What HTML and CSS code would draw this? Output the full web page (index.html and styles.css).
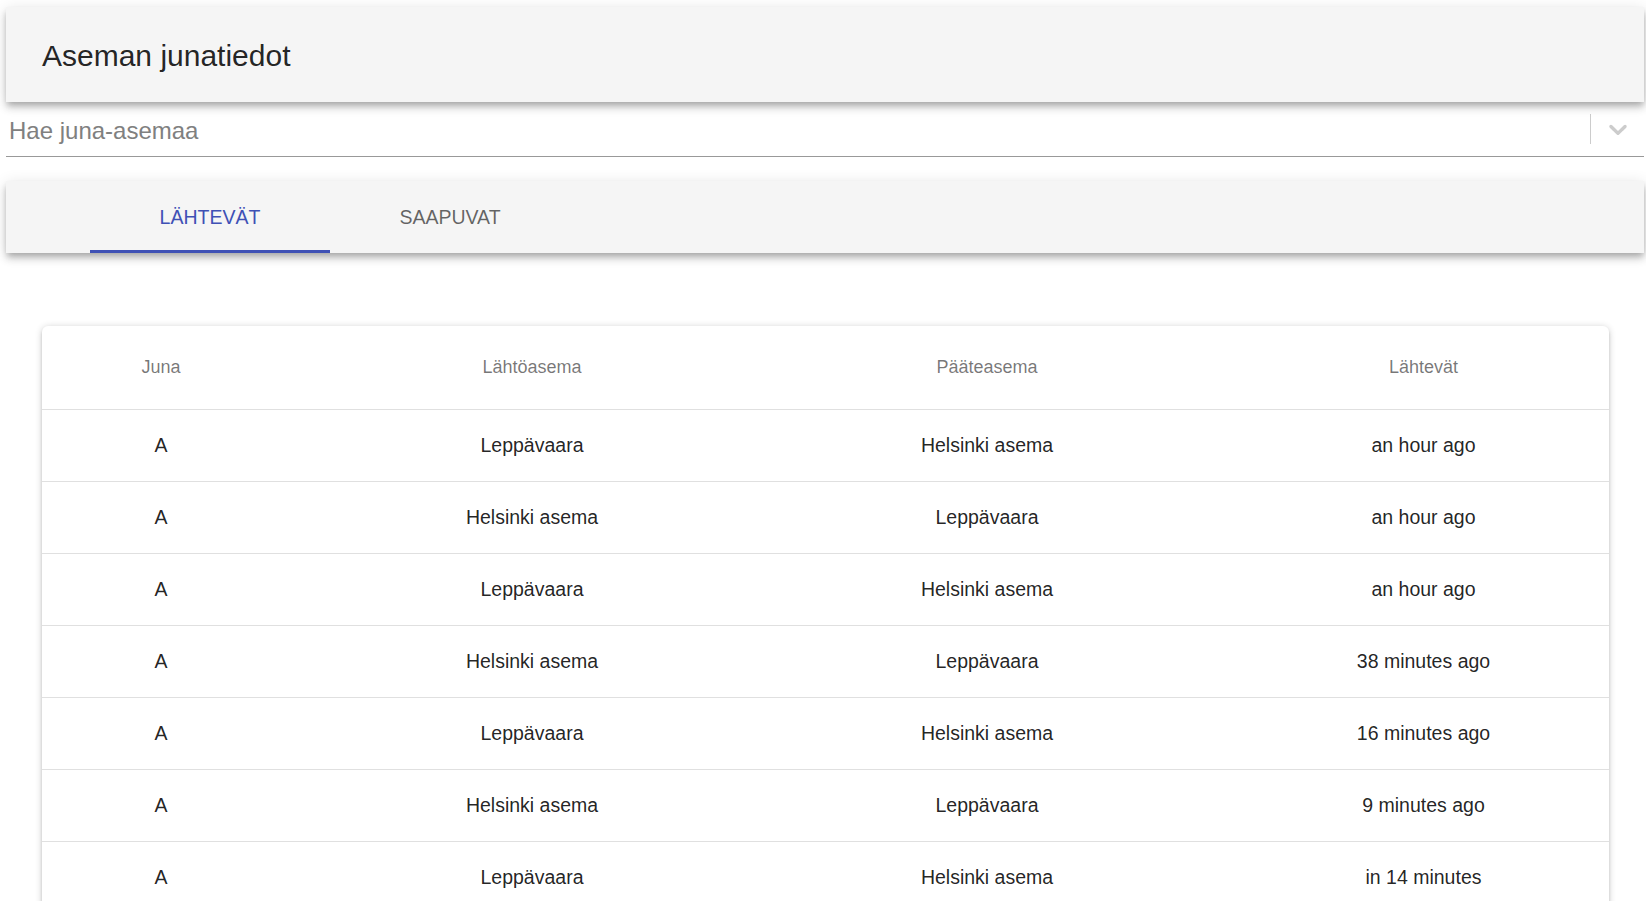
FILE: index.html
```html
<!DOCTYPE html>
<html lang="fi">
<head>
<meta charset="utf-8">
<title>Aseman junatiedot</title>
<link rel="stylesheet" href="styles.css">
</head>
<body>
<div class="app">
  <header class="appbar">
    <h1 class="title">Aseman junatiedot</h1>
  </header>

  <div class="select">
    <div class="select-value">Hae juna-asemaa</div>
    <div class="select-indicators">
      <span class="select-sep"></span>
      <span class="select-arrow">
        <svg viewBox="0 0 20 20" width="30" height="30" aria-hidden="true"><path d="M4.516 7.548c0.436-0.446 1.043-0.481 1.576 0l3.908 3.747 3.908-3.747c0.533-0.481 1.141-0.446 1.574 0 0.436 0.445 0.408 1.197 0 1.615-0.406 0.418-4.695 4.502-4.695 4.502-0.217 0.223-0.502 0.335-0.787 0.335s-0.57-0.112-0.789-0.335c0 0-4.287-4.084-4.695-4.502s-0.436-1.17 0-1.615z"></path></svg>
      </span>
    </div>
  </div>

  <nav class="tabbar">
    <div class="tabs">
      <div class="tab tab-active">LÄHTEVÄT</div>
      <div class="tab">SAAPUVAT</div>
    </div>
  </nav>

  <section class="card">
    <div class="trow thead">
      <div class="cell">Juna</div>
      <div class="cell">Lähtöasema</div>
      <div class="cell">Pääteasema</div>
      <div class="cell">Lähtevät</div>
    </div>
    <div class="trow">
      <div class="cell">A</div><div class="cell">Leppävaara</div><div class="cell">Helsinki asema</div><div class="cell">an hour ago</div>
    </div>
    <div class="trow">
      <div class="cell">A</div><div class="cell">Helsinki asema</div><div class="cell">Leppävaara</div><div class="cell">an hour ago</div>
    </div>
    <div class="trow">
      <div class="cell">A</div><div class="cell">Leppävaara</div><div class="cell">Helsinki asema</div><div class="cell">an hour ago</div>
    </div>
    <div class="trow">
      <div class="cell">A</div><div class="cell">Helsinki asema</div><div class="cell">Leppävaara</div><div class="cell">38 minutes ago</div>
    </div>
    <div class="trow">
      <div class="cell">A</div><div class="cell">Leppävaara</div><div class="cell">Helsinki asema</div><div class="cell">16 minutes ago</div>
    </div>
    <div class="trow">
      <div class="cell">A</div><div class="cell">Helsinki asema</div><div class="cell">Leppävaara</div><div class="cell">9 minutes ago</div>
    </div>
    <div class="trow">
      <div class="cell">A</div><div class="cell">Leppävaara</div><div class="cell">Helsinki asema</div><div class="cell">in 14 minutes</div>
    </div>
  </section>
</div>
</body>
</html>
```

FILE: styles.css
```css
html, body {
  margin: 0;
  padding: 0;
  background: #ffffff;
}

body {
  font-family: "Liberation Sans", Arial, sans-serif;
  color: rgba(0, 0, 0, 0.87);
}

.app {
  height: 100vh;
  overflow: hidden;
  padding: 7px 2px 0 6px;
  box-sizing: border-box;
}

/* App bar */
.appbar {
  height: 95px;
  background: #f5f5f5;
  display: flex;
  align-items: center;
  padding: 2px 36px 0;
  box-sizing: border-box;
  box-shadow: 0 3px 6px -1.5px rgba(0, 0, 0, 0.2),
              0 6px 7.5px 0 rgba(0, 0, 0, 0.14),
              0 1.5px 15px 0 rgba(0, 0, 0, 0.12);
  position: relative;
  z-index: 2;
}

.title {
  margin: 0;
  font-size: 30px;
  font-weight: 400;
  line-height: 1.2;
  color: rgba(0, 0, 0, 0.87);
}

/* Station select */
.select {
  height: 54px;
  display: flex;
  align-items: center;
  border-bottom: 1px solid #999999;
}

.select-value {
  flex: 1;
  padding-left: 3px;
  font-size: 24px;
  color: #808080;
  padding-top: 3px;
}

.select-indicators {
  display: flex;
  align-items: center;
  align-self: stretch;
}

.select-sep {
  width: 1px;
  height: 30px;
  background: #cccccc;
}

.select-arrow {
  display: flex;
  padding: 12px 11px 12px 12px;
}

.select-arrow svg {
  fill: #cccccc;
}

/* Tabs */
.tabbar {
  margin-top: 24px;
  height: 72px;
  background: #f5f5f5;
  box-shadow: 0 3px 6px -1.5px rgba(0, 0, 0, 0.2),
              0 6px 7.5px 0 rgba(0, 0, 0, 0.14),
              0 1.5px 15px 0 rgba(0, 0, 0, 0.12);
  padding: 0 84px;
}

.tabs {
  display: flex;
  height: 100%;
}

.tab {
  width: 240px;
  display: flex;
  align-items: center;
  justify-content: center;
  font-size: 19.5px;
  color: rgba(0, 0, 0, 0.6);
  box-sizing: border-box;
}

.tab-active {
  color: #3f51b5;
  border-bottom: 3px solid #3f51b5;
  padding-top: 3px;
}

/* Table card */
.card {
  margin: 73px 0 0 36px;
  width: 1567px;
  background: #ffffff;
  border-radius: 6px;
  box-shadow: 0 1.5px 7.5px 0 rgba(0, 0, 0, 0.2),
              0 3px 3px 0 rgba(0, 0, 0, 0.14),
              0 4.5px 1.5px -3px rgba(0, 0, 0, 0.12);
}

.trow {
  display: grid;
  grid-template-columns: 286px 456px 454px 1fr;
  height: 71px;
  border-bottom: 1px solid #e0e0e0;
  align-items: center;
  font-size: 19.5px;
  color: rgba(0, 0, 0, 0.87);
}

.trow.thead {
  height: 83px;
  font-size: 18px;
  color: rgba(0, 0, 0, 0.54);
}

.cell {
  text-align: center;
  padding: 0 84px 0 36px;
  white-space: nowrap;
}

.cell:last-child {
  padding-right: 36px;
}
```
